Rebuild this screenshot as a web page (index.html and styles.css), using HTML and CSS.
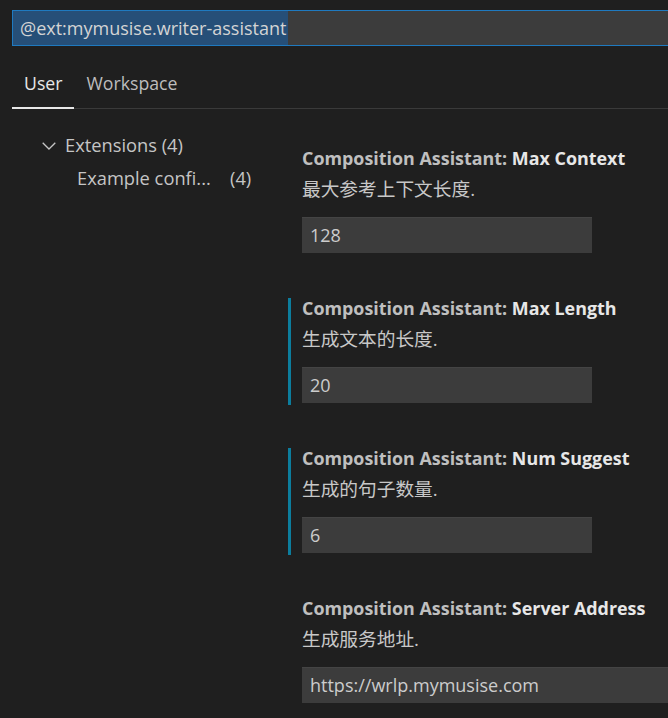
FILE: index.html
```html
<!DOCTYPE html>
<html lang="zh">
<head>
<meta charset="utf-8">
<title>Settings</title>
<link rel="stylesheet" href="styles.css">
</head>
<body>
<div class="page">
  <div class="search"><span class="sel">@ext:mymusise.writer-assistant</span></div>
  <div class="tabs">
    <div class="tab active">User</div>
    <div class="tab">Workspace</div>
  </div>
  <div class="content">
    <div class="tree">
      <div class="row">
        <svg class="chev" width="14" height="8" viewBox="0 0 14 8"><path d="M0.7 0.7 L7 7 L13.3 0.7" fill="none" stroke="#c5c5c5" stroke-width="1.3"/></svg>
        <span>Extensions (4)</span>
      </div>
      <div class="row sub">
        <span class="label">Example confi...</span>
        <span class="count">(4)</span>
      </div>
    </div>
    <div class="list">
      <div class="item">
        <div class="title"><span class="cat">Composition Assistant: </span><span class="key">Max Context</span></div>
        <div class="desc">最大参考上下文长度.</div>
        <div class="input">128</div>
      </div>
      <div class="item modified">
        <div class="title"><span class="cat">Composition Assistant: </span><span class="key">Max Length</span></div>
        <div class="desc">生成文本的长度.</div>
        <div class="input">20</div>
      </div>
      <div class="item modified">
        <div class="title"><span class="cat">Composition Assistant: </span><span class="key">Num Suggest</span></div>
        <div class="desc">生成的句子数量.</div>
        <div class="input">6</div>
      </div>
      <div class="item">
        <div class="title"><span class="cat">Composition Assistant: </span><span class="key">Server Address</span></div>
        <div class="desc">生成服务地址.</div>
        <div class="input wide">https://wrlp.mymusise.com</div>
      </div>
    </div>
  </div>
</div>
</body>
</html>
```
FILE: styles.css
```css
html, body {
  margin: 0;
  padding: 0;
  background: #1f1f1f;
  overflow: hidden;
}
body {
  width: 668px;
  height: 718px;
  font-family: "Open Sans", "Noto Sans CJK SC", sans-serif;
  color: #cccccc;
}
.page {
  padding-top: 10px;
}
.search {
  margin-left: 12px;
  height: 36px;
  box-sizing: border-box;
  border: 1px solid #1f7ac0;
  border-right: none;
  background: #3c3c3c;
  display: flex;
  align-items: stretch;
}
.sel {
  background: #264f78;
  color: #d4d4d4;
  font-size: 18px;
  line-height: 34px;
  padding: 0 2px 0 7px;
  white-space: nowrap;
}
.tabs {
  margin-left: 12px;
  margin-top: 13px;
  display: flex;
  border-bottom: 1px solid #3a3a3a;
}
.tab {
  padding: 0 12px;
  height: 49px;
  line-height: 49px;
  font-size: 17.7px;
  color: #bdbdbd;
  border-bottom: 1px solid transparent;
  margin-bottom: -1px;
}
.tab.active {
  color: #e7e7e7;
  border-bottom: 2px solid #e7e7e7;
  height: 48px;
}
.content {
  display: flex;
}
.tree {
  width: 288px;
  flex: none;
  padding-top: 19px;
  font-size: 18.3px;
  color: #c5c5c5;
}
.row {
  height: 33px;
  display: flex;
  align-items: center;
}
.chev {
  margin-left: 42px;
  margin-right: 9px;
  margin-top: 2px;
}
.row.sub {
  padding-left: 77px;
}
.label {
  width: 153px;
}
.list {
  padding-top: 39px;
  flex: 1;
  min-width: 0;
}
.item {
  border-left: 3px solid transparent;
  padding: 0 0 2px 11px;
  margin-bottom: 43px;
}
.item.modified {
  border-left-color: #0c7d9d;
}
.title {
  font-size: 17.9px;
  font-weight: 700;
  line-height: 20px;
  white-space: nowrap;
}
.cat {
  color: #bfbfbf;
}
.key {
  color: #e7e7e7;
}
.desc {
  margin-top: 8px;
  font-size: 18.7px;
  line-height: 26px;
  color: #c8c8c8;
}
.input {
  margin-top: 15px;
  width: 290px;
  height: 36px;
  box-sizing: border-box;
  background: #3c3c3c;
  border-top: 1px solid #444;
  padding-left: 8px;
  font-size: 18px;
  line-height: 35px;
  color: #cccccc;
  white-space: nowrap;
}
.input.wide {
  width: auto;
}
```
